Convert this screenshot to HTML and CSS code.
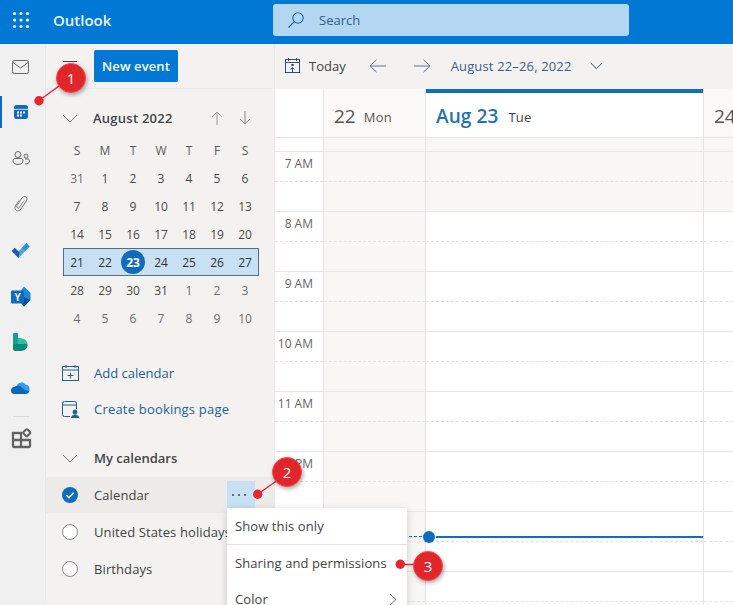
FILE: index.html
```html
<!DOCTYPE html>
<html lang="en">
<head>
<meta charset="utf-8">
<title>Outlook Calendar</title>
<link rel="stylesheet" href="styles.css">
</head>
<body>
<div class="app">
  <header class="topbar">
    <div class="waffle"><svg width="18" height="18" viewBox="0 0 18 18" fill="#fff"><circle cx="2.5" cy="2.5" r="1.6"/><circle cx="9" cy="2.5" r="1.6"/><circle cx="15.500" cy="2.5" r="1.6"/><circle cx="2.5" cy="9" r="1.6"/><circle cx="9" cy="9" r="1.6"/><circle cx="15.500" cy="9" r="1.6"/><circle cx="2.5" cy="15.500" r="1.6"/><circle cx="9" cy="15.500" r="1.6"/><circle cx="15.500" cy="15.500" r="1.6"/></svg></div>
    <div class="brand">Outlook</div>
    <div class="search">
      <svg width="18" height="18" viewBox="0 0 18 18" fill="none" stroke="#2b5f94" stroke-width="1.100"><circle cx="11" cy="7" r="5.200"/><path d="M7.300 10.700 1.500 16.500"/></svg>
      <span>Search</span>
    </div>
  </header>
  <div class="body">
    <nav class="rail">
      <div class="rail-item rail-first"><svg width="17" height="14" viewBox="0 0 17 14" fill="none" stroke="#666" stroke-width="1"><rect x=".5" y=".5" width="16" height="13" rx="2"/><path d="M1 2.500 8.500 8 16 2.500"/></svg></div>
      <div class="rail-item rail-on"><svg width="16" height="16" viewBox="0 0 16 16"><rect x="1" y="1" width="14" height="14" rx="2.500" fill="#0f6cbd"/><rect x="1" y="4.800" width="14" height="1" fill="#fff" opacity=".8"/><g fill="#fff"><rect x="4" y="7.500" width="2" height="2"/><rect x="7" y="7.500" width="2" height="2"/><rect x="10" y="7.500" width="2" height="2"/><rect x="4" y="10.500" width="2" height="2"/><rect x="7" y="10.500" width="2" height="2"/></g></svg></div>
      <div class="rail-item"><svg width="18" height="14" viewBox="0 0 18 14" fill="none" stroke="#666" stroke-width="1"><circle cx="6" cy="3.500" r="3"/><path d="M1 10c0-2 1-2.500 2-2.500h6c1 0 2 .5 2 2.500s-2 3.500-5 3.500S1 12 1 10z"/><circle cx="14" cy="5" r="2"/><path d="M13 13c3 0 4.500-1 4.500-3 0-1-.5-2-1.500-2h-3"/></svg></div>
      <div class="rail-item"><svg width="14" height="16" viewBox="0 0 14 16" fill="none" stroke="#777" stroke-width="1"><path d="M5 4.500 1.800 9.300c-1.400 2.100-1 4 .5 5s3.400.5 4.600-1.300l5.300-7.800c1.300-1.900.9-3.400-.4-4.300s-2.900-.4-4 1.200L3.200 9.400c-.7 1-.5 1.900.2 2.400s1.500.3 2.200-.7L9.500 5.300"/></svg></div>
      <div class="rail-item"><svg width="20" height="17" viewBox="0 0 20 17"><path d="M7.500 16 18.500 4.500 15.500 1 4.500 12.500z" fill="#4aa3ec"/><path d="M18.500 4.500 15.500 1 11 5.700l3 3.400z" fill="#2f8fe0"/><path d="M.5 9 3.800 5.800 8.500 10.500 7.500 16z" fill="#1a5bb5"/></svg></div>
      <div class="rail-item"><svg width="21" height="21" viewBox="0 0 21 21"><path d="M14 .5 20.500 7v7L14 20.500 9 14V7z" fill="#1b88d8"/><path d="M14 11l6.500 3L14 20.500 10 15z" fill="#0f4f97"/><rect x="1" y="4.500" width="13" height="13" rx="1" fill="#0f6cbd"/><text x="7.500" y="15" class="yam">Y</text></svg></div>
      <div class="rail-item"><svg width="15" height="18" viewBox="0 0 15 18"><path d="M0 1a1 1 0 0 1 1-1h3a1 1 0 0 1 1 1v10H0z" fill="#13a08f"/><path d="M5 5c5 0 9 1.500 9.500 6H5z" fill="#2ac0a9"/><path d="M0 11h14.500c.4 4-2.500 7-6.500 7H2a2 2 0 0 1-2-2z" fill="#0d8a7b"/></svg></div>
      <div class="rail-item"><svg width="19" height="12" viewBox="0 0 19 12"><path d="M6 3C7.500.3 12-1 14.500 2.500 17 2.500 19 5 18.500 8.500L9 8z" fill="#2f9fe8"/><path d="M0 9c-.3-2.600 1.800-4.500 4-4 1.500-2 5-2 6.500.3L14 8l4.500.5C18 10.800 16.800 12 15 12H3C1.500 12 .3 11 0 9z" fill="#0a67bd"/></svg></div>
      <div class="rail-sep"></div>
      <div class="rail-apps"><svg width="21" height="21" viewBox="0 0 21 21" fill="none" stroke="#636363" stroke-width="2.300"><path d="M2 5h8v14H3a1 1 0 0 1-1-1zM2 12h17M10 12h9v6a1 1 0 0 1-1 1h-8z"/><rect x="13" y="2" width="5.500" height="5.500" rx="1" stroke-width="2" transform="rotate(45 15.750 4.750)"/></svg></div>
    </nav>
    <aside class="side">
      <div class="side-top">
        <div class="burger"><i></i><i></i><i></i></div>
        <button class="new-event">New event</button>
      </div>
      <div class="month-head">
        <svg class="chev" width="16" height="9" viewBox="0 0 16 9" fill="none" stroke="#777" stroke-width="1"><path d="M1 1l7 7 7-7"/></svg>
        <span class="month-name">August 2022</span>
        <svg class="arr arr-first" width="12" height="14" viewBox="0 0 12 14" fill="none" stroke="#999" stroke-width="1"><path d="M6 14V1M1 6l5-5 5 5"/></svg>
        <svg class="arr" width="12" height="14" viewBox="0 0 12 14" fill="none" stroke="#888" stroke-width="1"><path d="M6 0v13M1 8l5 5 5-5"/></svg>
      </div>
      <div class="mini">
        <div class="mini-row dow"><span>S</span><span>M</span><span>T</span><span>W</span><span>T</span><span>F</span><span>S</span></div>
        <div class="mini-row"><span class="off">31</span><span>1</span><span>2</span><span>3</span><span>4</span><span>5</span><span>6</span></div>
        <div class="mini-row"><span>7</span><span>8</span><span>9</span><span>10</span><span>11</span><span>12</span><span>13</span></div>
        <div class="mini-row"><span>14</span><span>15</span><span>16</span><span>17</span><span>18</span><span>19</span><span>20</span></div>
        <div class="mini-row sel"><span>21</span><span>22</span><span class="today"><b>23</b></span><span>24</span><span>25</span><span>26</span><span>27</span></div>
        <div class="mini-row"><span>28</span><span>29</span><span>30</span><span>31</span><span class="off">1</span><span class="off">2</span><span class="off">3</span></div>
        <div class="mini-row"><span class="off">4</span><span class="off">5</span><span class="off">6</span><span class="off">7</span><span class="off">8</span><span class="off">9</span><span class="off">10</span></div>
      </div>
      <a class="link link-first"><svg width="17" height="16" viewBox="0 0 17 16" fill="none" stroke="#1f5f93" stroke-width="1"><rect x=".5" y="1.500" width="16" height="14"/><path d="M.5 5h16M4 0v3M13 0v3M8.500 7.500v6M5.500 10.500h6"/></svg><span>Add calendar</span></a>
      <a class="link link-second"><svg width="17" height="17" viewBox="0 0 17 17" fill="none" stroke="#1f5f93" stroke-width="1"><path d="M8 15.500H2.500a2 2 0 0 1-2-2v-11a2 2 0 0 1 2-2h10a2 2 0 0 1 2 2V8M.5 4h14"/><circle cx="13" cy="11" r="2" fill="#1f5f93"/><path d="M9.500 17c0-2 1.500-3 3.500-3s3.500 1 3.500 3z" fill="#1f5f93"/></svg><span>Create bookings page</span></a>
      <div class="group-head">
        <svg class="chev" width="16" height="9" viewBox="0 0 16 9" fill="none" stroke="#777" stroke-width="1"><path d="M1 1l7 7 7-7"/></svg>
        <span>My calendars</span>
      </div>
      <div class="cal-row cal-on">
        <svg width="16" height="16" viewBox="0 0 16 16"><circle cx="8" cy="8" r="8" fill="#0f6cbd"/><path d="M4.500 8.300 7 10.700 11.500 5.800" fill="none" stroke="#fff" stroke-width="1.500"/></svg>
        <span>Calendar</span>
        <div class="more"><i></i><i></i><i></i></div>
      </div>
      <div class="cal-row"><span class="radio"></span><span>United States holidays</span></div>
      <div class="cal-row"><span class="radio"></span><span>Birthdays</span></div>
    </aside>
    <main class="main">
      <div class="toolbar">
        <svg width="15" height="15" viewBox="0 0 15 15" fill="none" stroke="#2f4f6f" stroke-width="1"><rect x=".5" y="1.500" width="14" height="13"/><path d="M.5 4.500h14M3.500 0v3M11.500 0v3M7.500 14V9.500M5.500 11.500l2-2 2 2"/><rect x="6.300" y="6" width="2.400" height="2" fill="#2f4f6f" stroke="none"/></svg>
        <span class="today-btn">Today</span>
        <svg class="nav-a" width="18" height="14" viewBox="0 0 18 14" fill="none" stroke="#5b7490" stroke-width="1"><path d="M17 7H1M7.500 .8 1 7l6.500 6.200"/></svg>
        <svg class="nav-b" width="18" height="14" viewBox="0 0 18 14" fill="none" stroke="#5b7490" stroke-width="1"><path d="M1 7h16M10.500 .8 17 7l-6.500 6.200"/></svg>
        <span class="range">August 22–26, 2022</span>
        <svg class="range-chev" width="13" height="8" viewBox="0 0 13 8" fill="none" stroke="#2f4f6f" stroke-width="1"><path d="M.8 1l5.700 5.700L12.200 1"/></svg>
      </div>
      <div class="week">
        <div class="col col-time">
          <div class="head"></div><div class="allday"></div>
          <div class="hour"><span>7 AM</span></div>
          <div class="hour"><span>8 AM</span></div>
          <div class="hour"><span>9 AM</span></div>
          <div class="hour"><span>10 AM</span></div>
          <div class="hour"><span>11 AM</span></div>
          <div class="hour"><span>12 PM</span></div>
          <div class="hour"><span>1 PM</span></div>
          <div class="hour"><span>2 PM</span></div>
        </div>
        <div class="col col-mon">
          <div class="head"><span class="num">22</span><span class="wd">Mon</span></div><div class="allday off-hours"></div>
          <div class="hour off-hours"></div><div class="hour off-hours"></div><div class="hour off-hours"></div><div class="hour off-hours"></div><div class="hour off-hours"></div><div class="hour off-hours"></div><div class="hour off-hours"></div><div class="hour off-hours"></div>
        </div>
        <div class="col col-tue">
          <div class="head head-today"><span class="num-today">Aug 23</span><span class="wd wd-today">Tue</span></div><div class="allday off-hours"></div>
          <div class="hour off-hours"></div><div class="hour"></div><div class="hour"></div><div class="hour"></div><div class="hour"></div><div class="hour"></div><div class="hour"></div><div class="hour"></div>
          <div class="now"><i class="now-dot"></i><i class="now-dash"></i></div>
        </div>
        <div class="col col-wed">
          <div class="head"><span class="num">24</span></div><div class="allday off-hours"></div>
          <div class="hour off-hours"></div><div class="hour"></div><div class="hour"></div><div class="hour"></div><div class="hour"></div><div class="hour"></div><div class="hour"></div><div class="hour"></div>
        </div>
      </div>
    </main>
  </div>
  <div class="menu">
    <div class="menu-item menu-sep">Show this only</div>
    <div class="menu-item menu-mid">Sharing and permissions</div>
    <div class="menu-item menu-last"><span>Color</span><svg width="8" height="13" viewBox="0 0 8 13" fill="none" stroke="#777" stroke-width="1"><path d="M1 1l6 5.500L1 12"/></svg></div>
  </div>
  <svg class="leaders" width="733" height="605" viewBox="0 0 733 605"><g stroke="#e8262c" stroke-width="1.500" fill="#e8262c"><path d="M39 100.500 66 81"/><circle cx="39" cy="100.700" r="4.700" stroke="none"/><path d="M258 494 282 477"/><circle cx="257.700" cy="494.300" r="4.700" stroke="none"/><path d="M400 564.500h24"/><circle cx="400.300" cy="564.300" r="4.700" stroke="none"/></g></svg>
  <div class="badge b1">1</div>
  <div class="badge b2">2</div>
  <div class="badge b3">3</div>
</div>
</body>
</html>
```
FILE: styles.css
```css
* { box-sizing: border-box; }
html, body { margin: 0; padding: 0; height: 605px; overflow: hidden; background: #fff; }
body { font-family: "Open Sans", "Noto Sans", "Liberation Sans", sans-serif; font-size: 13px; color: #444; }
.app { position: relative; width: 733px; height: 605px; overflow: hidden; display: flex; flex-direction: column; }

.topbar { height: 44px; flex: none; background: #0078d4; display: flex; align-items: center; padding-bottom: 4px; color: #fff; }
.waffle { width: 46px; padding-left: 12px; display: flex; align-items: center; }
.waffle svg { display: block; }
.brand { width: 227px; padding-left: 7px; font-size: 15px; font-weight: 600; color: #e9f4fc; }
.search { width: 356px; height: 32px; background: #b3d6f2; border-radius: 3px; display: flex; align-items: center; gap: 14px; padding-left: 14px; color: #2f5f8f; font-size: 13px; }

.body { flex: 1; display: flex; min-height: 0; }
.rail { width: 46px; flex: none; background: #f0f0f0; border-right: 1px solid #e8e8e8; display: flex; flex-direction: column; }
.rail-item { height: 46px; flex: none; position: relative; display: flex; align-items: center; justify-content: center; padding-right: 4px; }
.rail-first { height: 45px; }
.rail-on::before { content: ""; position: absolute; left: 0; top: 7px; width: 2px; height: 32px; background: #0f6cbd; }
.rail-sep { height: 1px; width: 16px; margin: 5px 0 0 13px; background: #d8d8d8; }
.rail-apps { margin-top: 11px; display: flex; justify-content: center; padding-right: 3px; }

.side { width: 229px; flex: none; background: #f3f2f1; border-right: 1px solid #edebe9; display: flex; flex-direction: column; }
.side-top { height: 45px; flex: none; border-bottom: 1px solid #eceae8; display: flex; padding: 6px 0 0 17px; }
.burger { width: 14px; height: 13px; margin-top: 11px; display: flex; flex-direction: column; justify-content: space-between; }
.burger i { display: block; height: 1px; background: #444; }
.new-event { margin-left: 17px; width: 84px; height: 32px; border: 0; border-radius: 2px; background: #0078d4; color: #fff; font: 600 13px "Open Sans", sans-serif; letter-spacing: .1px; padding: 0; }

.month-head { display: flex; align-items: center; height: 24px; margin-top: 17px; padding-left: 16px; }
.month-name { margin-left: 15px; font-size: 13px; font-weight: 600; letter-spacing: .25px; color: #444; width: 115px; white-space: nowrap; }
.arr-first { margin-left: 3px; margin-right: 16px; }

.mini { margin: 6px 0 0 17px; width: 196px; }
.mini-row { display: grid; grid-template-columns: repeat(7, 28px); height: 28px; font-size: 12px; color: #4a4a4a; }
.mini-row span { display: flex; align-items: center; justify-content: center; }
.dow { color: #5a5a5a; }
.off { color: #6e6e6e; }
.sel { background: #c7e0f4; outline: 1px solid #5a6b7b; outline-offset: -1px; color: #333; }
.today b { width: 24px; height: 24px; border-radius: 50%; background: #0f6cbd; color: #fff; font-weight: 700; display: flex; align-items: center; justify-content: center; }

.link { display: flex; align-items: center; gap: 15px; height: 20px; padding-left: 16px; color: #1f5f93; font-size: 13px; white-space: nowrap; }
.link-first { margin-top: 31px; }
.link-second { margin-top: 16px; letter-spacing: .2px; }
.group-head { display: flex; align-items: center; height: 20px; margin-top: 29px; padding-left: 16px; font-weight: 600; color: #444; font-size: 13px; }
.group-head span { margin-left: 16px; }
.cal-row { height: 37px; flex: none; display: flex; align-items: center; gap: 16px; padding-left: 16px; font-size: 13px; letter-spacing: .1px; white-space: nowrap; color: #444; overflow: hidden; }
.cal-on { margin-top: 9px; height: 36px; background: #edebe9; position: relative; }
.more { position: absolute; left: 181px; top: 4px; width: 28px; height: 28px; background: #c7e0f4; display: flex; align-items: center; justify-content: center; gap: 4px; padding-right: 4px; }
.more i { width: 2px; height: 2px; background: #444; border-radius: 50%; }
.radio { width: 16px; height: 16px; border-radius: 50%; background: #fff; border: 1px solid #8a8886; flex: none; }

.main { flex: 1; min-width: 0; display: flex; flex-direction: column; }
.toolbar { height: 45px; flex: none; background: #f3f2f1; display: flex; align-items: center; padding: 0 0 2px 10px; }
.today-btn { margin-left: 9px; color: #444; font-size: 13px; }
.nav-a { margin-left: 23px; }
.nav-b { margin-left: 26px; }
.range { margin-left: 20px; color: #3c6085; font-size: 13px; letter-spacing: .15px; white-space: nowrap; }
.range-chev { margin-left: 18px; }

.week { flex: 1; min-height: 0; display: grid; grid-template-columns: 48px 102px 278px 1fr; overflow: hidden; }
.col { position: relative; min-width: 0; }
.col + .col { border-left: 1px solid #e6e4e2; }
.head { height: 48px; display: flex; align-items: center; padding: 6px 0 0 10px; gap: 8px; white-space: nowrap; color: #555; background: #faf9f8; }
.col-time .head { background: #fff; }
.head-today { background: #fff; border-top: 4px solid #106ebe; padding-top: 2px; }
.num { font-size: 19px; color: #555; }
.wd { font-size: 13px; color: #555; padding-top: 2px; letter-spacing: .2px; }
.num-today { font-size: 19px; font-weight: 600; color: #1f72b5; letter-spacing: .1px; }
.wd-today { color: #444; margin-left: 2px; }
.allday { height: 14px; border-top: 1px solid #e8e6e4; }
.hour { height: 60px; border-top: 1px solid #e8e6e4; position: relative; }
.hour::after { content: ""; position: absolute; left: 0; right: 0; top: 29px; border-top: 1px dashed #e4e2e0; }
.hour span { position: absolute; right: 10px; top: 3px; font-size: 12px; color: #666; white-space: nowrap; }
.off-hours { background: #f8f7f6; }
.now { position: absolute; left: 0; right: 0; top: 447px; height: 2px; background: #106ebe; margin-left: 10px; }
.now-dot { position: absolute; left: -13px; top: -5px; width: 12px; height: 12px; border-radius: 50%; background: #0f6cbd; }
.now-dash { position: absolute; left: -112px; top: 0; width: 98px; border-top: 1px dashed #106ebe; }

.menu { position: absolute; left: 227px; top: 508px; width: 180px; height: 110px; background: #fff; box-shadow: 0 2px 8px rgba(0,0,0,.18); font-size: 13px; letter-spacing: .1px; color: #444; }
.menu-item { padding-left: 8px; display: flex; align-items: center; white-space: nowrap; }
.menu-sep { height: 37px; border-bottom: 1px solid #e4e2e0; }
.menu-mid { height: 36px; }
.menu-last { height: 36px; justify-content: space-between; padding-right: 10px; }

.leaders { position: absolute; left: 0; top: 0; pointer-events: none; }
.badge { position: absolute; width: 30px; height: 30px; border-radius: 50%; background: #e0262b; border: 1px solid #f04b4f; box-shadow: 1px 2px 4px rgba(0,0,0,.35); color: #fff; font: 15px "Open Sans", sans-serif; display: flex; align-items: center; justify-content: center; }
.b1 { left: 56px; top: 63px; }
.b2 { left: 272px; top: 457px; }
.b3 { left: 413px; top: 551px; }
.yam { font: 700 10px "Liberation Sans", sans-serif; fill: #fff; text-anchor: middle; }
```
